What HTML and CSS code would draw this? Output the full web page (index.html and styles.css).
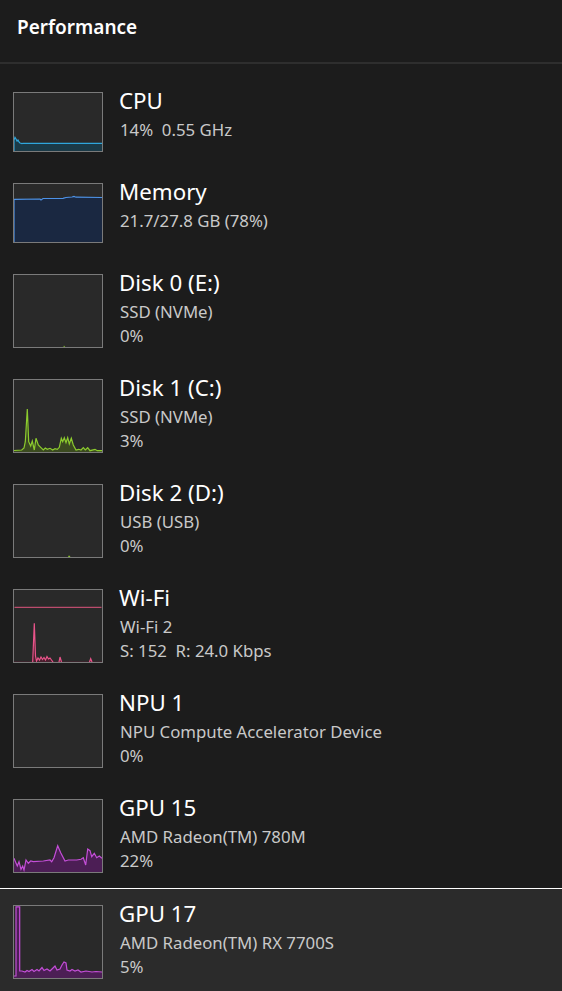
FILE: index.html
```html
<!DOCTYPE html>
<html>
<head>
<meta charset="utf-8">
<link rel="stylesheet" href="styles.css">
</head>
<body>
<div class="app">
  <header class="header"><h1 class="title">Performance</h1></header>
  <ul class="list">
    <li class="item">
      <div class="thumb short">
        <svg viewBox="0 0 88 58" preserveAspectRatio="none">
          <path class="cpu-fill" d="M0 58 L0 47 L1 44.3 L2 46 L3 48 L4 47 L5 49 L6 50 L8 50.6 L9 50.3 L88 50.3 L88 58 Z"/>
          <path class="cpu-line" d="M0 58 L0 47 L1 44.3 L2 46 L3 48 L4 47 L5 49 L6 50 L8 50.6 L9 50.3 L88 50.3"/>
        </svg>
      </div>
      <div class="info">
        <div class="name">CPU</div>
        <div class="sub">14%&nbsp;&nbsp;0.55 GHz</div>
      </div>
    </li>
    <li class="item">
      <div class="thumb short">
        <svg viewBox="0 0 88 58" preserveAspectRatio="none">
          <path class="mem-fill" d="M0 58 L0 15.3 L26 15 L27 16 L29 14.5 L49 14.3 L52 13.5 L58 13 L60 12.5 L62 13.2 L88 13.5 L88 58 Z"/>
          <path class="mem-line" d="M0 58 L0 15.3 L26 15 L27 16 L29 14.5 L49 14.3 L52 13.5 L58 13 L60 12.5 L62 13.2 L88 13.5"/>
        </svg>
      </div>
      <div class="info">
        <div class="name">Memory</div>
        <div class="sub">21.7/27.8 GB (78%)</div>
      </div>
    </li>
    <li class="item">
      <div class="thumb">
        <svg viewBox="0 0 88 72" preserveAspectRatio="none">
          <path class="disk-dot" d="M49.5 72 L50 70.6 L51 72 Z"/>
        </svg>
      </div>
      <div class="info">
        <div class="name">Disk 0 (E:)</div>
        <div class="sub">SSD (NVMe)</div>
        <div class="sub">0%</div>
      </div>
    </li>
    <li class="item">
      <div class="thumb">
        <svg viewBox="0 0 88 72" preserveAspectRatio="none">
          <path class="disk-fill" d="M0 72 L0 70.5 L7.7 70 L10 68 L11.3 61.7 L13.3 29 L14.7 61.7 L16.7 66 L18.3 61 L20.3 70 L22 58.3 L24.3 65 L26.7 67.3 L29.3 70 L31.3 68 L33.3 69.3 L36 68.3 L38.7 70 L41 68.7 L43.3 69.3 L45.3 67.3 L47.3 58.3 L48.7 61.7 L50.3 57.7 L52 62.7 L53.7 57.7 L55.3 64 L57.3 58.3 L59.3 65 L62 70 L64.7 69.3 L67 70 L69.3 67.7 L71.3 70 L73.7 67.7 L76 70.7 L81 69.3 L83.3 70.7 L88 70.7 L88 72 Z"/>
          <path class="disk-line" d="M0 70.5 L7.7 70 L10 68 L11.3 61.7 L13.3 29 L14.7 61.7 L16.7 66 L18.3 61 L20.3 70 L22 58.3 L24.3 65 L26.7 67.3 L29.3 70 L31.3 68 L33.3 69.3 L36 68.3 L38.7 70 L41 68.7 L43.3 69.3 L45.3 67.3 L47.3 58.3 L48.7 61.7 L50.3 57.7 L52 62.7 L53.7 57.7 L55.3 64 L57.3 58.3 L59.3 65 L62 70 L64.7 69.3 L67 70 L69.3 67.7 L71.3 70 L73.7 67.7 L76 70.7 L81 69.3 L83.3 70.7 L88 70.7"/>
        </svg>
      </div>
      <div class="info">
        <div class="name">Disk 1 (C:)</div>
        <div class="sub">SSD (NVMe)</div>
        <div class="sub">3%</div>
      </div>
    </li>
    <li class="item">
      <div class="thumb">
        <svg viewBox="0 0 88 72" preserveAspectRatio="none">
          <path class="disk-dot" d="M54 72 L55 70.3 L56.5 72 Z"/>
        </svg>
      </div>
      <div class="info">
        <div class="name">Disk 2 (D:)</div>
        <div class="sub">USB (USB)</div>
        <div class="sub">0%</div>
      </div>
    </li>
    <li class="item">
      <div class="thumb">
        <svg viewBox="0 0 88 72" preserveAspectRatio="none">
          <path class="wifi-scale" d="M0.5 17.3 L87.5 17.3"/>
          <path class="wifi-fill" d="M0 72 L0 71.5 L18.7 71.5 L20.3 33.3 L21.5 66 L22.5 71 L24 68 L25.5 70 L27 67 L28.5 69.5 L30 67.5 L31.5 70 L33 66.5 L34.5 69 L36 68 L37.5 70 L39 71.5 L45 71.5 L46 67 L47.5 71.5 L75.5 71.5 L76.7 68.7 L78 71.5 L88 71.5 L88 72 Z"/>
          <path class="wifi-line" d="M18.7 72 L20.3 33.3 L21.5 66 L22.5 71 L24 68 L25.5 70 L27 67 L28.5 69.5 L30 67.5 L31.5 70 L33 66.5 L34.5 69 L36 68 L37.5 70 L39 72 M45 72 L46 67 L47.5 72 M75.5 72 L76.7 68.7 L78 72"/>
        </svg>
      </div>
      <div class="info">
        <div class="name">Wi-Fi</div>
        <div class="sub">Wi-Fi 2</div>
        <div class="sub">S: 152&nbsp;&nbsp;R: 24.0 Kbps</div>
      </div>
    </li>
    <li class="item">
      <div class="thumb"></div>
      <div class="info">
        <div class="name">NPU 1</div>
        <div class="sub">NPU Compute Accelerator Device</div>
        <div class="sub">0%</div>
      </div>
    </li>
    <li class="item">
      <div class="thumb">
        <svg viewBox="0 0 88 72" preserveAspectRatio="none">
          <path class="gpu-fill" d="M0 72 L0 58.3 L1 60.7 L3.3 66 L5 61.7 L7 69.3 L8.7 66 L10 70 L12 60 L14.3 63.3 L16.7 61 L19.3 61.7 L29.3 61 L36 60 L37.7 61.7 L40 57.7 L43.7 45.7 L46.7 52.7 L51 61 L54.3 60 L62.7 60 L67 59.3 L69.3 57.7 L71.7 65 L73.7 49 L76 50.7 L77.7 56.7 L80.3 53.3 L82.7 57.7 L85.3 56 L88 58.3 L88 72 Z"/>
          <path class="gpu-line" d="M0 58.3 L1 60.7 L3.3 66 L5 61.7 L7 69.3 L8.7 66 L10 70 L12 60 L14.3 63.3 L16.7 61 L19.3 61.7 L29.3 61 L36 60 L37.7 61.7 L40 57.7 L43.7 45.7 L46.7 52.7 L51 61 L54.3 60 L62.7 60 L67 59.3 L69.3 57.7 L71.7 65 L73.7 49 L76 50.7 L77.7 56.7 L80.3 53.3 L82.7 57.7 L85.3 56 L88 58.3"/>
        </svg>
      </div>
      <div class="info">
        <div class="name">GPU 15</div>
        <div class="sub">AMD Radeon(TM) 780M</div>
        <div class="sub">22%</div>
      </div>
    </li>
    <li class="item selected">
      <div class="thumb">
        <svg viewBox="0 0 88 72" preserveAspectRatio="none">
          <path class="gpu-fill" d="M0 72 L0 70 L2 70 L2 0.8 L5.7 0.8 L5.7 65 L8 65 L11 66 L13 64.5 L15 65.5 L18 63.5 L20 65.5 L23 63.5 L25 65 L28 61.5 L30 64.5 L33 63 L36 65 L38 63 L41 60 L43 64 L46 63 L48 59 L50 56 L52 57 L53 64 L56 65 L58 63.5 L61 65 L64 64 L67 66 L72 65 L78 66 L82 65.5 L88 66 L88 72 Z"/>
          <path class="gpu-line" d="M0 70 L2 70 L2 0.8 L5.7 0.8 L5.7 65 L8 65 L11 66 L13 64.5 L15 65.5 L18 63.5 L20 65.5 L23 63.5 L25 65 L28 61.5 L30 64.5 L33 63 L36 65 L38 63 L41 60 L43 64 L46 63 L48 59 L50 56 L52 57 L53 64 L56 65 L58 63.5 L61 65 L64 64 L67 66 L72 65 L78 66 L82 65.5 L88 66"/>
        </svg>
      </div>
      <div class="info">
        <div class="name">GPU 17</div>
        <div class="sub">AMD Radeon(TM) RX 7700S</div>
        <div class="sub">5%</div>
      </div>
    </li>
  </ul>
</div>
</body>
</html>
```
FILE: styles.css
```css
* { box-sizing: border-box; }
html, body {
  margin: 0;
  padding: 0;
  background: #1c1c1c;
  height: 100%;
  overflow: hidden;
}
body {
  font-family: "Noto Sans", "Open Sans", sans-serif;
  color: #fff;
}
.app {
  width: 562px;
  height: 991px;
  background: #1c1c1c;
}
.header {
  height: 64px;
  border-bottom: 2px solid #2e2e2e;
  padding: 12px 0 0 17px;
}
.title {
  margin: 0;
  font-size: 19px;
  font-weight: 600;
  line-height: 30px;
  color: #fff;
}
.list {
  list-style: none;
  margin: 0;
  padding: 12px 0 0 0;
}
.item {
  display: flex;
  align-items: flex-start;
  gap: 16px;
  padding: 15px 0 15px 13px;
  border-top: 1px solid transparent;
}
.item.selected {
  background: #2b2b2b;
  border-top-color: #ffffff;
  padding-top: 16px;
}
.thumb {
  flex: none;
  width: 90px;
  height: 74px;
  border: 1px solid #7a7a7a;
  background: #292929;
}
.thumb.short { height: 60px; }
.thumb svg {
  display: block;
  width: 88px;
  height: 100%;
}
.info {
  margin-top: -4px;
}
.name {
  font-size: 22.3px;
  line-height: 26px;
  color: #ffffff;
  white-space: nowrap;
}
.sub {
  font-size: 16.8px;
  line-height: 24px;
  color: #c9c9c9;
  white-space: nowrap;
  padding-left: 1px;
}
.name + .sub { margin-top: 4px; }

.cpu-fill { fill: #1b3a47; }
.cpu-line { fill: none; stroke: #2fa6dc; stroke-width: 1.2; }
.mem-fill { fill: #1a2841; }
.mem-line { fill: none; stroke: #4d92e6; stroke-width: 1.2; }
.disk-fill { fill: #3b4a20; }
.disk-dot { fill: #8ccb2e; }
.disk-line { fill: none; stroke: #8ccb2e; stroke-width: 1.2; }
.wifi-scale { fill: none; stroke: #e0557f; stroke-width: 1; }
.wifi-fill { fill: #4a1f2e; }
.wifi-line { fill: none; stroke: #e8548a; stroke-width: 1.2; }
.gpu-fill { fill: #4c1e55; }
.gpu-line { fill: none; stroke: #c44ed8; stroke-width: 1.2; }
```
